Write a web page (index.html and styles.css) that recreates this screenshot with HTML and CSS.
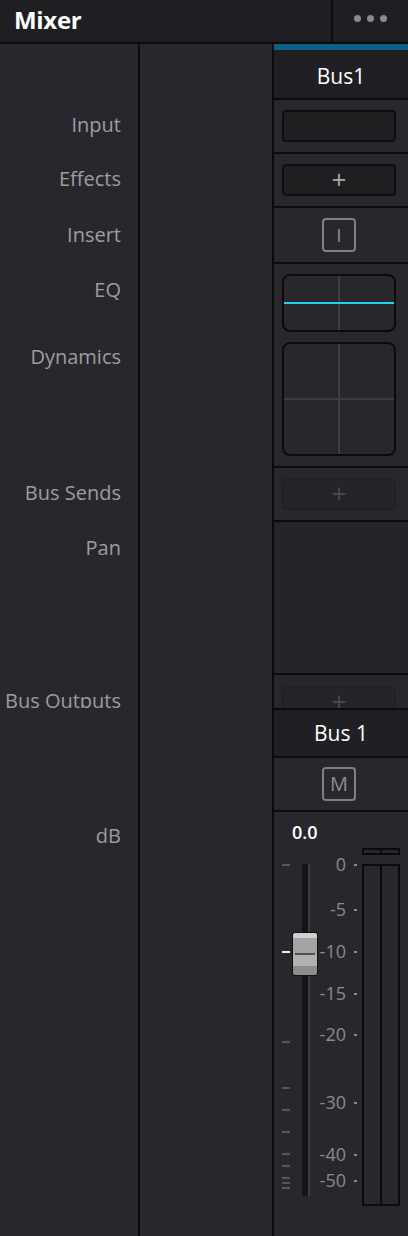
FILE: index.html
```html
<!DOCTYPE html>
<html>
<head>
<meta charset="utf-8">
<link rel="stylesheet" href="styles.css">
</head>
<body>
<div class="app">
  <header class="topbar">
    <div class="title">Mixer</div>
    <div class="menu"><span class="dot"></span><span class="dot"></span><span class="dot"></span></div>
  </header>
  <div class="upper">
    <div class="col labels">
      <div class="lrow lrow-head"></div>
      <div class="lrow lrow-std"><span class="label">Input</span></div>
      <div class="lrow lrow-std"><span class="label">Effects</span></div>
      <div class="lrow lrow-insert"><span class="label">Insert</span></div>
      <div class="lrow lrow-fx"><span class="label">EQ</span><span class="label label-dyn">Dynamics</span></div>
      <div class="lrow lrow-std"><span class="label">Bus Sends</span></div>
      <div class="lrow lrow-pan"><span class="label">Pan</span></div>
      <div class="lrow lrow-out"><span class="label">Bus Outputs</span></div>
    </div>
    <div class="col mid"></div>
    <div class="col bus">
      <div class="bus-accent"></div>
      <div class="cell cell-head">Bus1</div>
      <div class="cell cell-std"><div class="slot"></div></div>
      <div class="cell cell-std"><div class="slot">+</div></div>
      <div class="cell cell-insert"><div class="toggle">I</div></div>
      <div class="cell cell-fx">
        <div class="graph graph-eq"><div class="vline"></div><div class="eq-curve"></div></div>
        <div class="graph graph-dyn"><div class="vline"></div><div class="hline"></div></div>
      </div>
      <div class="cell cell-std"><div class="slot slot-dim">+</div></div>
      <div class="cell cell-pan"></div>
      <div class="cell cell-out"><div class="slot slot-dim">+</div></div>
    </div>
  </div>
  <div class="lower">
    <div class="col labels">
      <span class="label label-db">dB</span>
    </div>
    <div class="col mid"></div>
    <div class="col bus">
      <div class="cell cell-name">Bus 1</div>
      <div class="cell cell-mute"><div class="toggle">M</div></div>
      <div class="fader-area">
        <div class="db-value">0.0</div>
        <div class="track"></div>
        <div class="cap"><div class="cap-line"></div></div>
        <span class="tick tick-cur"></span>
        <span class="tick" style="top:52px"></span>
        <span class="tick" style="top:229px"></span>
        <span class="tick" style="top:275px"></span>
        <span class="tick" style="top:297px"></span>
        <span class="tick" style="top:319px"></span>
        <span class="tick" style="top:341px"></span>
        <span class="tick" style="top:353px"></span>
        <span class="tick" style="top:365px"></span>
        <span class="tick" style="top:370px"></span>
        <span class="tick" style="top:375px"></span>
        <div class="scale" style="top:42px">0</div>
        <div class="scale" style="top:87px">-5</div>
        <div class="scale" style="top:129px">-10</div>
        <div class="scale" style="top:171px">-15</div>
        <div class="scale" style="top:212px">-20</div>
        <div class="scale" style="top:280px">-30</div>
        <div class="scale" style="top:332px">-40</div>
        <div class="scale" style="top:358px">-50</div>
        <div class="peak"><span></span><span></span></div>
        <div class="meter"><span></span><span></span></div>
      </div>
    </div>
  </div>
</div>
</body>
</html>
```
FILE: styles.css
```css
* { box-sizing: border-box; }
html, body { margin: 0; padding: 0; }
body {
  background: #28272d;
  font-family: "Open Sans", "Noto Sans", "DejaVu Sans", sans-serif;
  width: 408px;
  height: 1236px;
  overflow: hidden;
}
.app { width: 408px; height: 1236px; display: flex; flex-direction: column; }

.topbar {
  height: 44px;
  flex: none;
  display: flex;
  background: #1f1e23;
  border-bottom: 2px solid #0b0b0c;
}
.title {
  width: 333px;
  border-right: 2px solid #0b0b0c;
  color: #ffffff;
  font-weight: 700;
  font-size: 24px;
  line-height: 40px;
  padding-left: 14px;
  letter-spacing: -0.3px;
}
.menu {
  flex: 1;
  display: flex;
  align-items: center;
  gap: 6px;
  padding-left: 21px;
  padding-bottom: 6px;
}
.dot { width: 7px; height: 7px; border-radius: 50%; background: #8b8b8e; }

.upper { height: 664px; flex: none; display: flex; overflow: hidden; }
.lower { flex: 1; display: flex; }

.col { display: flex; flex-direction: column; }
.labels { width: 140px; border-right: 2px solid #0b0b0c; background: #28272d; }
.mid { width: 134px; border-right: 2px solid #0b0b0c; background: #28272d; }
.bus { width: 134px; background: #28272d; }

.label {
  display: block;
  color: #9d9da2;
  font-size: 20px;
  line-height: 24px;
  text-align: right;
  padding-right: 17px;
  white-space: nowrap;
}
.lrow { flex: none; padding-top: 13px; }
.lrow-head { height: 56px; padding: 0; }
.lrow-std { height: 54px; }
.lrow-insert { height: 56px; padding-top: 15px; }
.lrow-fx { height: 204px; padding-top: 14px; }
.label-dyn { margin-top: 43px; }
.lrow-pan { height: 153px; padding-top: 14px; }
.lrow-out { height: 60px; padding-top: 14px; }
.label-db { margin-top: 116px; }

.bus-accent { height: 6px; background: #0d5f85; flex: none; }
.cell {
  flex: none;
  border-bottom: 2px solid #0b0b0c;
  padding: 10px 12px 0 8px;
}
.cell-head, .cell-name {
  height: 50px;
  background: #201f24;
  color: #ffffff;
  font-size: 21px;
  line-height: 48px;
  text-align: center;
  padding: 2px 0 0 0;
}
.cell-std { height: 54px; }
.cell-insert { height: 56px; display: flex; justify-content: center; align-items: center; padding: 0 12px 0 8px; }
.cell-fx { height: 204px; }
.cell-pan { height: 153px; background: #252429; }
.cell-out { height: 40px; border-bottom: none; padding-top: 11px; }

.slot {
  height: 32px;
  background: #1f1e20;
  border: 2px solid #0e0e0f;
  border-radius: 4px;
  color: #a9a9ac;
  font-size: 26px;
  line-height: 27px;
  text-align: center;
  font-weight: 400;
}
.slot-dim {
  background: #252428;
  border-color: #222125;
  color: #4c4c50;
}

.toggle {
  width: 34px;
  height: 34px;
  border: 2px solid #808083;
  border-radius: 4px;
  color: #8e8e91;
  font-size: 19px;
  line-height: 30px;
  text-align: center;
}

.graph {
  position: relative;
  border: 2px solid #0b0b0c;
  border-radius: 8px;
  background: #28272d;
  overflow: hidden;
}
.graph-eq { height: 58px; margin-bottom: 10px; }
.graph-dyn { height: 114px; }
.vline { position: absolute; left: 54px; top: 0; bottom: 0; width: 2px; background: #3c3c42; }
.hline { position: absolute; top: 54px; left: 0; right: 0; height: 2px; background: #3c3c42; }
.eq-curve { position: absolute; top: 26px; left: 0; right: 0; height: 2px; background: #1fd6ec; }

.cell-name { border-top: 2px solid #0b0b0c; height: 50px; padding: 0; line-height: 46px; }
.cell-mute { height: 54px; display: flex; justify-content: center; align-items: center; padding: 0 12px 0 8px; }
.cell-mute .toggle { font-size: 20px; }

.fader-area { position: relative; flex: 1; }
.db-value {
  color: #ffffff;
  font-size: 18px;
  font-weight: 600;
  line-height: 20px;
  padding: 10px 0 0 18px;
}
.track {
  position: absolute;
  left: 28px;
  top: 52px;
  width: 8px;
  height: 332px;
  background: #151517;
  border-right: 2px solid #3b3b41;
}
.cap {
  position: absolute;
  left: 18px;
  top: 120px;
  width: 26px;
  height: 44px;
  border: 1px solid #111;
  border-radius: 3px;
  background: linear-gradient(#cfcfcf 0, #cfcfcf 5px, #a3a3a3 5px, #a3a3a3 20px, #b0b0b0 22px, #b3b3b3 33px, #8d8d8d 33px, #8d8d8d 100%);
}
.cap-line { position: absolute; left: 2px; right: 2px; top: 20px; height: 2px; background: #4f4f52; }
.tick {
  position: absolute;
  left: 8px;
  width: 8px;
  height: 2px;
  background: #55555b;
}
.tick-cur { top: 139px; height: 2px; background: #f0f0f0; }
.scale {
  position: absolute;
  left: 30px;
  width: 42px;
  text-align: right;
  color: #8a8a90;
  font-size: 18px;
  line-height: 20px;
}
.scale::after {
  content: "";
  position: absolute;
  right: -11px;
  top: 10px;
  width: 3px;
  height: 2px;
  background: #8a8a90;
}
.peak, .meter {
  position: absolute;
  left: 88px;
  width: 38px;
  display: flex;
  border: 2px solid #0b0b0c;
  gap: 2px;
  background: #0b0b0c;
}
.peak { top: 36px; height: 7px; }
.meter { top: 52px; height: 342px; }
.peak span, .meter span { flex: 1; background: #28272d; }
```
